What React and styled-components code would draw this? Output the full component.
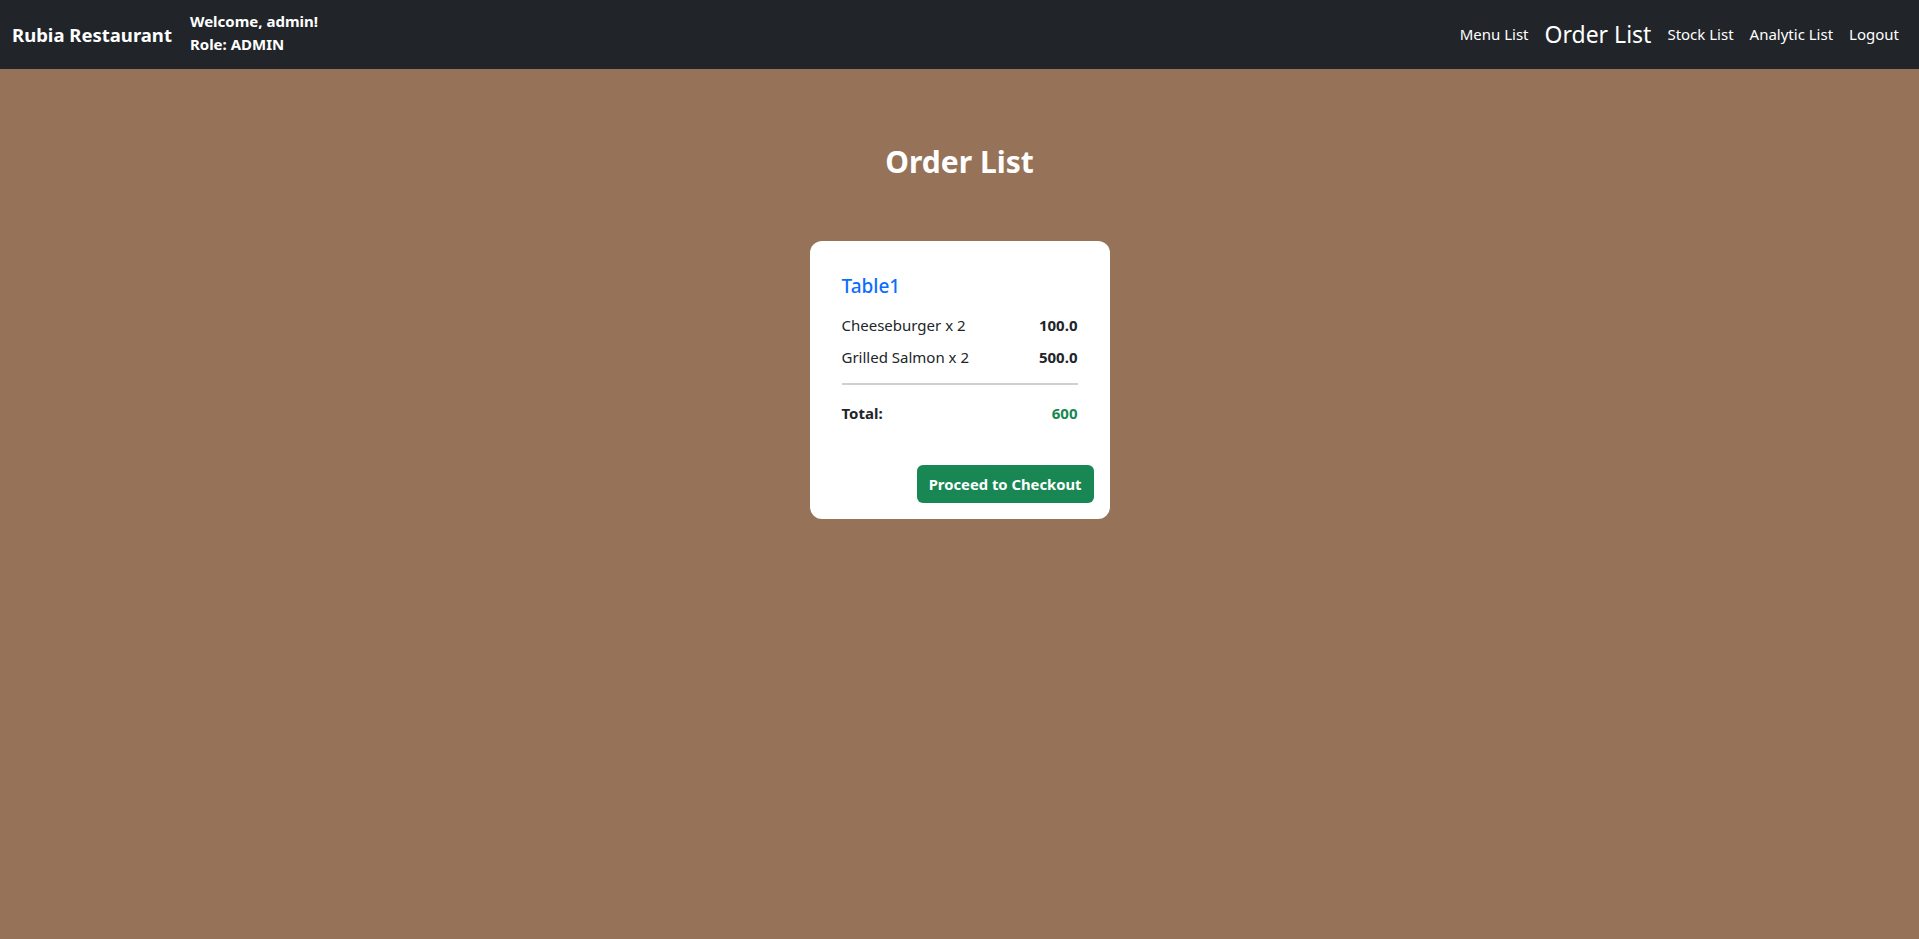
import React from "react";
import styled, { createGlobalStyle } from "styled-components";

const GlobalStyle = createGlobalStyle`
  html, body { margin: 0; padding: 0; }
  body {
    background: #967358;
    font-family: "Segoe UI", "Noto Sans", "Liberation Sans", sans-serif;
    color: #212529;
    min-height: 100vh;
  }
  * { box-sizing: border-box; }
`;

const Navbar = styled.nav`
  height: 69px;
  background: #212529;
  display: flex;
  align-items: center;
  justify-content: space-between;
  padding: 0 12px;
`;

const Left = styled.div`
  display: flex;
  align-items: center;
  gap: 18px;
`;

const Brand = styled.a`
  color: #fff;
  font-weight: 700;
  font-size: 18.5px;
  text-decoration: none;
  padding: 5px 0;
`;

const UserInfo = styled.div`
  display: flex;
  flex-direction: column;
  color: #fff;
  font-weight: 700;
  font-size: 15px;
  line-height: 23px;
  margin-top: -3px;
`;

const NavLinks = styled.ul`
  list-style: none;
  display: flex;
  align-items: center;
  margin: 0;
  padding: 0;
`;

const NavLink = styled.a`
  display: block;
  padding: 8px;
  color: #fff;
  text-decoration: none;
  font-size: ${(p) => (p.$active ? "23px" : "15px")};
  line-height: 1.5;
`;

const Main = styled.main`
  display: flex;
  flex-direction: column;
  align-items: center;
  padding-top: 74px;
`;

const Title = styled.h2`
  margin: 0 0 60px;
  color: #fff;
  font-size: 30px;
  font-weight: 700;
  line-height: 38px;
`;

const Card = styled.div`
  width: 300px;
  background: #fff;
  border-radius: 12px;
  padding: 16px;
  display: flex;
  flex-direction: column;
`;

const CardBody = styled.div`
  padding: 17px 16px 0;
`;

const TableName = styled.h5`
  margin: 0 0 15px;
  color: #0d6efd;
  font-size: 19px;
  font-weight: 500;
  line-height: 24px;
`;

const ItemRow = styled.div`
  display: flex;
  justify-content: space-between;
  font-size: 15px;
  line-height: 24px;
  margin-bottom: 8px;
`;

const Price = styled.span`
  font-weight: 700;
`;

const Divider = styled.hr`
  margin: 14px 0 16px;
  border: 0;
  border-top: 2px solid #cfcfcf;
`;

const TotalRow = styled.div`
  display: flex;
  justify-content: space-between;
  font-size: 15px;
  line-height: 24px;
  font-weight: 700;
`;

const TotalValue = styled.span`
  color: #198754;
`;

const Footer = styled.div`
  display: flex;
  justify-content: flex-end;
  margin-top: 40px;
`;

const CheckoutButton = styled.button`
  background: #198754;
  color: #fff;
  border: none;
  border-radius: 6px;
  font-family: inherit;
  font-size: 14.8px;
  font-weight: 700;
  line-height: 24px;
  padding: 7px 12px;
  cursor: pointer;
`;

const items = [
  { name: "Cheeseburger", qty: 2, price: "100.0" },
  { name: "Grilled Salmon", qty: 2, price: "500.0" },
];

export default function App() {
  return (
    <>
      <GlobalStyle />
      <Navbar>
        <Left>
          <Brand href="#">Rubia Restaurant</Brand>
          <UserInfo>
            <span>Welcome, admin!</span>
            <span>Role: ADMIN</span>
          </UserInfo>
        </Left>
        <NavLinks>
          <li><NavLink href="#">Menu List</NavLink></li>
          <li><NavLink href="#" $active>Order List</NavLink></li>
          <li><NavLink href="#">Stock List</NavLink></li>
          <li><NavLink href="#">Analytic List</NavLink></li>
          <li><NavLink href="#">Logout</NavLink></li>
        </NavLinks>
      </Navbar>
      <Main>
        <Title>Order List</Title>
        <Card>
          <CardBody>
            <TableName>Table1</TableName>
            {items.map((it) => (
              <ItemRow key={it.name}>
                <span>{it.name} x {it.qty}</span>
                <Price>{it.price}</Price>
              </ItemRow>
            ))}
            <Divider />
            <TotalRow>
              <span>Total:</span>
              <TotalValue>600</TotalValue>
            </TotalRow>
          </CardBody>
          <Footer>
            <CheckoutButton>Proceed to Checkout</CheckoutButton>
          </Footer>
        </Card>
      </Main>
    </>
  );
}
